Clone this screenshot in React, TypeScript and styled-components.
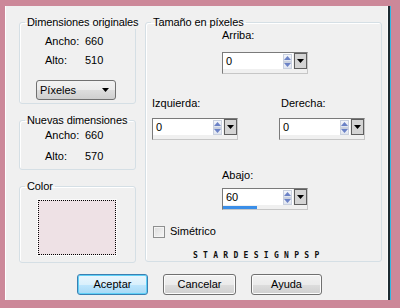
import React from "react";
import styled, { createGlobalStyle } from "styled-components";

const Global = createGlobalStyle`
  html, body {
    margin: 0;
    padding: 0;
    background: #cc8899;
  }
  * { box-sizing: border-box; }
  body {
    font-family: "Liberation Sans", Arial, sans-serif;
    font-size: 11px;
    line-height: 13px;
    color: #000;
  }
`;

function Arrow({ color = "#000", up = false }: { color?: string; up?: boolean }) {
  return (
    <svg width="7" height="4" viewBox="0 0 7 4">
      <polygon points={up ? "0,4 7,4 3.5,0" : "0,0 7,0 3.5,4"} fill={color} />
    </svg>
  );
}

function NumberField({ value, fill = 0 }: { value: string; fill?: number }) {
  return (
    <NumBox>
      <NumTop>
        <NumInput>{value}</NumInput>
        <Spin>
          <SpinHalf><Arrow color="#6b82c6" up /></SpinHalf>
          <SpinHalf><Arrow color="#6b82c6" /></SpinHalf>
        </Spin>
        <DropBtn><Arrow /></DropBtn>
      </NumTop>
      <Bar>
        <BarFill style={{ width: `${fill}%` }} />
      </Bar>
    </NumBox>
  );
}

export default function App() {
  return (
    <>
      <Global />
      <Dialog>
        <Main>
          <LeftCol>
            <Group $pt={6} $pb={3}>
              <Legend>Dimensiones originales</Legend>
              <InfoRow>
                <InfoLabel>Ancho:</InfoLabel>
                <span>660</span>
              </InfoRow>
              <InfoRow $mt={6}>
                <InfoLabel>Alto:</InfoLabel>
                <span>510</span>
              </InfoRow>
              <Select>
                <span>Píxeles</span>
                <Arrow />
              </Select>
            </Group>
            <Group $pt={2} $pb={6}>
              <Legend>Nuevas dimensiones</Legend>
              <InfoRow>
                <InfoLabel>Ancho:</InfoLabel>
                <span>660</span>
              </InfoRow>
              <InfoRow $mt={8}>
                <InfoLabel>Alto:</InfoLabel>
                <span>570</span>
              </InfoRow>
            </Group>
            <Group $pt={6} $pb={6}>
              <Legend>Color</Legend>
              <Swatch />
            </Group>
          </LeftCol>

          <RightGroup $pt={0} $pb={1}>
            <Legend>Tamaño en píxeles</Legend>
            <FieldRow $ml={76}>
              <Field>
                <FieldLabel $mb={10}>Arriba:</FieldLabel>
                <NumberField value="0" />
              </Field>
            </FieldRow>
            <FieldRow $ml={6} $mt={23} $gap={41}>
              <Field>
                <FieldLabel $mb={8}>Izquierda:</FieldLabel>
                <NumberField value="0" />
              </Field>
              <Field>
                <FieldLabel $mb={8} $indent={2}>Derecha:</FieldLabel>
                <NumberField value="0" />
              </Field>
            </FieldRow>
            <FieldRow $ml={76} $mt={29}>
              <Field>
                <FieldLabel $mb={6}>Abajo:</FieldLabel>
                <NumberField value="60" fill={41} />
              </Field>
            </FieldRow>
            <CheckRow>
              <CheckBox />
              <span>Simétrico</span>
            </CheckRow>
            <Signature>STARDESIGNPSP</Signature>
          </RightGroup>
        </Main>

        <Buttons>
          <Button $primary>Aceptar</Button>
          <Button $w={73}>Cancelar</Button>
          <Button>Ayuda</Button>
        </Buttons>
      </Dialog>
    </>
  );
}

const Dialog = styled.div`
  margin: 6px 0 0 5px;
  width: 383px;
  height: 294px;
  background: #f0f0f0;
  border-left: 1px solid #ffffff;
  border-right: 1px solid #fbfbfb;
  box-shadow: 2px 0 0 #1d2a30, 3px 0 0 #2fb8e2;
  padding: 10px 0 5px 13px;
  display: flex;
  flex-direction: column;
`;

const Main = styled.div`
  display: flex;
  gap: 9px;
  align-items: flex-start;
`;

const LeftCol = styled.div`
  width: 117px;
  display: flex;
  flex-direction: column;
  gap: 10px;
`;

const Group = styled.fieldset<{ $pt: number; $pb: number }>`
  margin: 0;
  min-width: 0;
  border: 1px solid #d5dfe5;
  border-radius: 3px;
  box-shadow: inset 1px 1px 0 #ffffff;
  padding: ${(p) => p.$pt}px 0 ${(p) => p.$pb}px 0;
  display: flex;
  flex-direction: column;
`;

const RightGroup = styled(Group)`
  width: 237px;
`;

const Legend = styled.legend`
  margin-left: 5px;
  padding: 0 2px;
  line-height: 13px;
  font-size: 11px;
  white-space: nowrap;
  letter-spacing: -0.1px;
`;

const InfoRow = styled.div<{ $mt?: number }>`
  display: flex;
  padding-left: 25px;
  margin-top: ${(p) => p.$mt || 0}px;
  height: 13px;
`;

const InfoLabel = styled.span`
  width: 40px;
`;

const Select = styled.div`
  margin: 13px 0 0 16px;
  width: 80px;
  height: 20px;
  border: 1px solid #707070;
  border-radius: 3px;
  background: linear-gradient(#f2f2f2 0%, #ebebeb 50%, #dddddd 51%, #cfcfcf 100%);
  display: flex;
  align-items: center;
  justify-content: space-between;
  padding: 0 6px 0 3px;
`;

const Swatch = styled.div`
  margin-left: 17px;
  width: 80px;
  height: 57px;
  border: 1px solid #fbfbfb;
  outline: 1px dotted #000;
  outline-offset: -2px;
  background: #eee1e5;
`;

const FieldRow = styled.div<{ $ml: number; $mt?: number; $gap?: number }>`
  display: flex;
  margin-left: ${(p) => p.$ml}px;
  margin-top: ${(p) => p.$mt || 0}px;
  gap: ${(p) => p.$gap || 0}px;
`;

const Field = styled.div`
  display: flex;
  flex-direction: column;
`;

const FieldLabel = styled.span<{ $mb: number; $indent?: number }>`
  height: 13px;
  margin-bottom: ${(p) => p.$mb}px;
  padding-left: ${(p) => p.$indent || 0}px;
`;

const NumBox = styled.div`
  width: 86px;
  height: 22px;
  border: 1px solid;
  border-color: #7a7a7a #c6c6c6 #c6c6c6 #7a7a7a;
  background: #f0f0f0;
  display: flex;
  flex-direction: column;
`;

const NumTop = styled.div`
  display: flex;
  height: 17px;
`;

const NumInput = styled.div`
  flex: 1;
  background: #ffffff;
  padding: 2px 0 0 3px;
`;

const Spin = styled.div`
  width: 10px;
  background: #ffffff;
  display: flex;
  flex-direction: column;
  padding: 1px 1px 0 0;
`;

const SpinHalf = styled.div`
  flex: 1;
  display: flex;
  align-items: center;
  justify-content: center;
  background: linear-gradient(#f4f6fb, #dfe4ef);
  border: 1px solid #c9d0de;
`;

const DropBtn = styled.div`
  width: 13px;
  height: 16px;
  margin-left: 1px;
  border: 1px solid #5e5e5e;
  background: #d4d4d4;
  display: flex;
  align-items: center;
  justify-content: center;
`;

const Bar = styled.div`
  height: 3px;
  margin-top: 1px;
`;

const BarFill = styled.div`
  height: 3px;
  background: #3a8ee8;
`;

const CheckRow = styled.div`
  display: flex;
  align-items: center;
  gap: 5px;
  margin: 15px 0 0 7px;
  height: 13px;
`;

const CheckBox = styled.div`
  width: 12px;
  height: 12px;
  border: 1px solid #8e8f8f;
  background: linear-gradient(135deg, #dcdcdc, #f6f6f6);
  box-shadow: inset 0 0 0 1px #f4f4f4;
`;

const Signature = styled.div`
  margin: 13px 0 0 47px;
  height: 9px;
  font-family: "DejaVu Sans Mono", monospace;
  font-weight: bold;
  font-size: 8px;
  line-height: 9px;
  letter-spacing: 5.3px;
  color: #111;
`;

const Buttons = styled.div`
  display: flex;
  gap: 15px;
  margin: 11px 0 0 58px;
`;

const Button = styled.div<{ $primary?: boolean; $w?: number }>`
  width: ${(p) => p.$w || 71}px;
  height: 21px;
  border: 1px solid ${(p) => (p.$primary ? "#3c7fb1" : "#707070")};
  border-radius: 3px;
  display: flex;
  align-items: center;
  justify-content: center;
  background: ${(p) =>
    p.$primary
      ? "linear-gradient(#eaf6fd 0%, #d9f0fc 50%, #bee6fd 51%, #a7d9f5 100%)"
      : "linear-gradient(#f2f2f2 0%, #ebebeb 50%, #dddddd 51%, #cfcfcf 100%)"};
  box-shadow: ${(p) => (p.$primary ? "inset 0 0 0 1px #5fd0f7" : "inset 0 0 0 1px #fcfcfc")};
`;
